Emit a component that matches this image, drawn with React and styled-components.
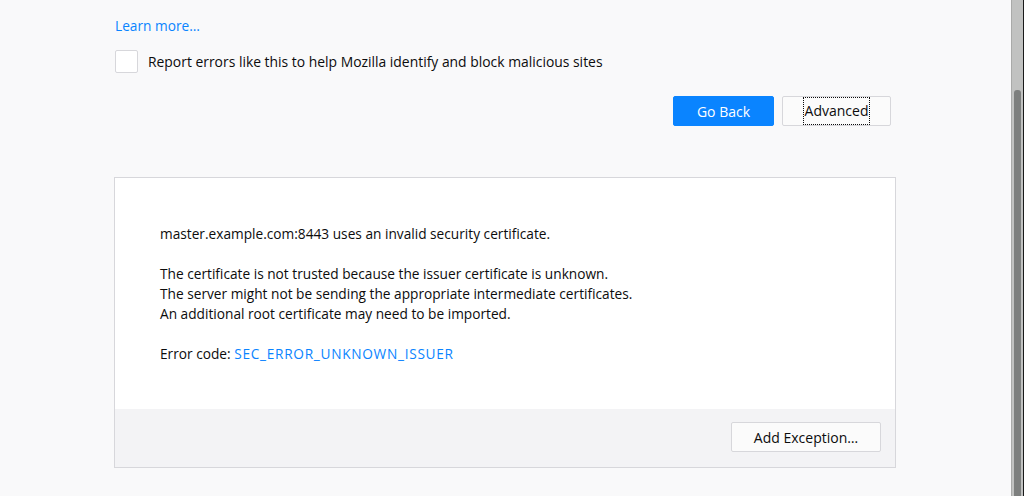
import React from 'react';
import styled, { createGlobalStyle } from 'styled-components';

const GlobalStyle = createGlobalStyle`
    html, body {
        margin: 0;
        padding: 0;
        background: #f9f9fa;
        overflow: hidden;
    }
    body {
        font-family: "Open Sans", "Noto Sans", sans-serif;
        color: #0c0c0d;
    }
`;

const Page = styled.div`
    width: 782px;
    margin-left: 114px;
    padding-top: 14px;
    height: 496px;
    box-sizing: border-box;
`;

const Link = styled.a`
    color: #0a84ff;
    text-decoration: none;
    font-size: ${props => props.size || 13.7}px;
    letter-spacing: ${props => props.spread || 0}px;
    cursor: pointer;
`;

const LearnRow = styled.div`
    padding-left: 1px;
    line-height: 22px;
`;

const CheckRow = styled.label`
    display: flex;
    align-items: center;
    gap: 10px;
    margin-top: 13px;
    padding-left: 1px;
    font-size: 13.9px;
    line-height: 22px;
`;

const Checkbox = styled.span`
    width: 21px;
    height: 21px;
    border: 1px solid #d7d7db;
    border-radius: 2px;
    background: #fff;
    flex-shrink: 0;
`;

const ButtonRow = styled.div`
    display: flex;
    justify-content: flex-end;
    gap: 8px;
    margin-top: 23px;
    padding-right: 5px;
`;

const Button = styled.button`
    height: 30px;
    box-sizing: border-box;
    border-radius: 2px;
    padding: 0;
    width: ${props => props.width}px;
    font-family: inherit;
    font-size: 14px;
    border: 1px solid ${props => (props.primary ? '#0a84ff' : '#d7d7db')};
    background: ${props => (props.primary ? '#0a84ff' : '#fbfbfb')};
    color: ${props => (props.primary ? '#fff' : '#0c0c0d')};
    display: flex;
    align-items: center;
    justify-content: center;
`;

const FocusRing = styled.span`
    outline: 1px dotted #0c0c0d;
    line-height: 26px;
    padding: 0 1px;
`;

const Panel = styled.section`
    margin-top: 51px;
    border: 1px solid #d7d7db;
    background: #fff;
`;

const PanelBody = styled.div`
    padding: 46px 45px 45px;
    font-size: 13.7px;
    line-height: 20px;
`;

const Para = styled.p`
    margin: 0 0 ${props => props.gap || 0}px;
    line-height: ${props => props.lh || 20}px;
`;

const PanelFooter = styled.div`
    background: #f3f3f5;
    height: 58px;
    display: flex;
    justify-content: flex-end;
    align-items: flex-start;
    padding: 13px 14px 0;
    box-sizing: border-box;
`;

// browser scrollbar drawn over the page edge
const Scrollbar = styled.div`
    position: fixed;
    top: 0;
    right: 0;
    width: 13px;
    height: 100%;
    background: #c1c2c1;
    border-left: 1px solid #a9aaa9;
    border-right: 1px solid #1a1a1a;
    box-sizing: border-box;
`;

const Thumb = styled.div`
    position: absolute;
    left: 2px;
    top: 90px;
    bottom: -10px;
    width: 7px;
    border-radius: 3px;
    background: #7d7f7e;
`;

export default function App() {
    return (
        <>
            <GlobalStyle />
            <Page>
                <LearnRow>
                    <Link size={13.7}>Learn more…</Link>
                </LearnRow>
                <CheckRow>
                    <Checkbox />
                    Report errors like this to help Mozilla identify and block malicious sites
                </CheckRow>
                <ButtonRow>
                    <Button primary width={101}>Go Back</Button>
                    <Button width={109}>
                        <FocusRing>Advanced</FocusRing>
                    </Button>
                </ButtonRow>
                <Panel>
                    <PanelBody>
                        <Para gap={19}>master.example.com:8443 uses an invalid security certificate.</Para>
                        <Para lh={21}>The certificate is not trusted because the issuer certificate is unknown.</Para>
                        <Para>The server might not be sending the appropriate intermediate certificates.</Para>
                        <Para gap={20}>An additional root certificate may need to be imported.</Para>
                        <Para>
                            Error code: <Link spread={0.7}>SEC_ERROR_UNKNOWN_ISSUER</Link>
                        </Para>
                    </PanelBody>
                    <PanelFooter>
                        <Button width={150}>Add Exception…</Button>
                    </PanelFooter>
                </Panel>
            </Page>
            <Scrollbar>
                <Thumb />
            </Scrollbar>
        </>
    );
}
